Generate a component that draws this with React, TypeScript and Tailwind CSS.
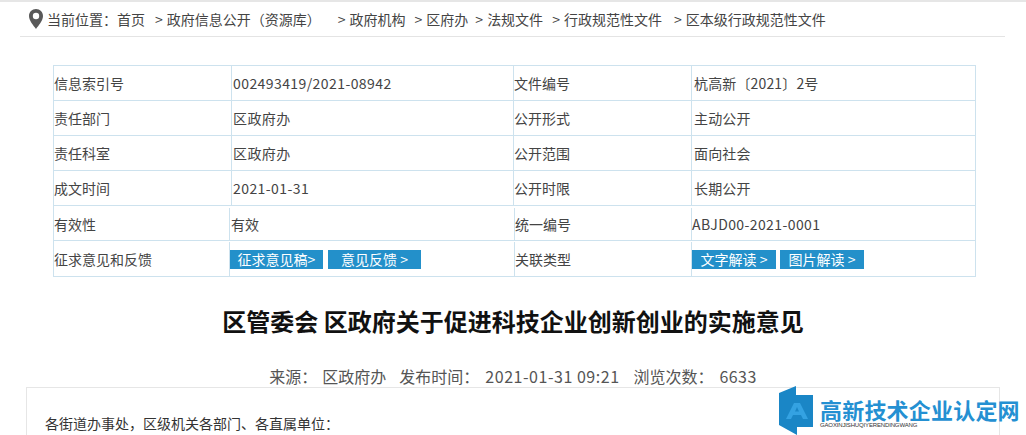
const FONT = "font-['Noto_Sans_CJK_SC','Open_Sans',sans-serif]";

const topRows = [
  ["信息索引号", "002493419/2021-08942", "文件编号", "杭高新〔2021〕2号"],
  ["责任部门", "区政府办", "公开形式", "主动公开"],
  ["责任科室", "区政府办", "公开范围", "面向社会"],
  ["成文时间", "2021-01-31", "公开时限", "长期公开"],
];

const crumbs = [
  { label: "政府信息公开（资源库）", ml: "ml-[10px]" },
  { label: "政府机构", ml: "ml-[17px]" },
  { label: "区府办", ml: "ml-[9px]" },
  { label: "法规文件", ml: "ml-[7px]" },
  { label: "行政规范性文件", ml: "ml-[9px]" },
  { label: "区本级行政规范性文件", ml: "ml-[12px]" },
];

const Cell = ({ children, w }: { children: React.ReactNode; w: string }) => (
  <div className={`${w} flex h-full items-center border-r border-[#cde2ee] last:border-r-0`}>{children}</div>
);

const LinkButton = ({ label, w }: { label: string; w: string }) => (
  <span className={`${w} flex h-[19px] items-center justify-center bg-[#2390ca] text-[14px] text-white`}>{label}</span>
);

const Logo = () => (
  <div className="absolute left-[779px] top-[386px] flex h-[49px] items-start">
    <svg width="35" height="49" viewBox="0 0 35 49">
      <path d="M0 7 L17 0 L17 9 L34 9 L34 41 L18 41 L18 49 L0 39 Z" fill="#1a86c6" />
      <path
        d="M7 33 L15 17 L21 17 L29 33 L24 33 L22 29 L14 29 L12 33 Z M16 25.500 L20 25.500 L18 21 Z"
        fill="#34a2e2"
        fillRule="evenodd"
      />
    </svg>
    <div className="mt-[12px] ml-[6px] flex flex-col">
      <span className="text-[22px] leading-[23px] font-bold tracking-[0.2px] whitespace-nowrap text-[#2490d2]">高新技术企业认定网</span>
      <span className="font-['Liberation_Sans',sans-serif] text-[6px] leading-[8px] tracking-[-0.15px] whitespace-nowrap text-[#333]">GAOXINJISHUQIYERENDINGWANG</span>
    </div>
  </div>
);

export default function App() {
  return (
    <div className={`${FONT} relative h-[435px] w-[1026px] overflow-hidden bg-white text-[14px] text-[#444]`}>
      <div className="h-[2px] bg-[#e6e6e6]" />
      <div className="mx-[20px] flex h-[35px] w-[985px] items-center border-b border-[#e4e4e4] pl-[9px]">
        <svg width="14" height="20" viewBox="0 0 14 20" className="mr-[4px]">
          <path d="M7 0C3 0 0 3 0 7c0 4.500 4.500 9.500 7 13 2.500-3.500 7-8.500 7-13 0-4-3-7-7-7z" fill="#595959" />
          <circle cx="7" cy="7" r="3.200" fill="#fff" />
        </svg>
        <span className="whitespace-nowrap">当前位置：首页</span>
        {crumbs.map((c) => (
          <span key={c.label} className={`${c.ml} whitespace-nowrap`}>
            <span className="mr-[4px]">&gt;</span>
            {c.label}
          </span>
        ))}
      </div>

      <div className="mx-[53px] mt-[28px] w-[923px] border border-[#cde2ee] text-[14px]">
        {topRows.map((r) => (
          <div key={r[0]} className="flex h-[35px] border-b border-[#cde2ee] last:h-[36px] last:border-b-2">
            <Cell w="w-[178px]">{r[0]}</Cell>
            <Cell w="w-[282px] pl-[1px] tracking-[0.42px]">{r[1]}</Cell>
            <Cell w="w-[178px]">{r[2]}</Cell>
            <Cell w="flex-1 pl-[2px] tracking-[0.15px]">{r[3]}</Cell>
          </div>
        ))}
        <div className="flex h-[35px] border-b border-[#cde2ee] pt-[2px]">
          <Cell w="w-[176px]">有效性</Cell>
          <Cell w="w-[285px] pl-[1px]">有效</Cell>
          <Cell w="w-[177px]">统一编号</Cell>
          <Cell w="flex-1 tracking-[0.4px]">ABJD00-2021-0001</Cell>
        </div>
        <div className="flex h-[35px] pt-[1px]">
          <Cell w="w-[176px]">征求意见和反馈</Cell>
          <Cell w="w-[285px] gap-[5px]">
            <LinkButton label="征求意见稿>" w="w-[93px]" />
            <LinkButton label="意见反馈&nbsp;>" w="w-[93px]" />
          </Cell>
          <Cell w="w-[177px]">关联类型</Cell>
          <Cell w="flex-1 gap-[4px]">
            <LinkButton label="文字解读&nbsp;>" w="w-[84px]" />
            <LinkButton label="图片解读&nbsp;>" w="w-[84px]" />
          </Cell>
        </div>
      </div>

      <h1 className="mt-[28px] text-center text-[24px] leading-[32px] font-bold text-[#111]">
        区管委会 区政府关于促进科技企业创新创业的实施意见
      </h1>

      <div className="mt-[28px] flex justify-center text-[16px] leading-[22px] text-[#555]">
        <span>来源：</span>
        <span className="ml-[5px]">区政府办</span>
        <span className="ml-[13px]">发布时间：</span>
        <span className="ml-[6px] tracking-[0.53px]">2021-01-31 09:21</span>
        <span className="ml-[14px]">浏览次数：</span>
        <span className="ml-[6px] tracking-[0.4px]">6633</span>
      </div>

      <div className="mx-[26px] h-[60px] w-[974px] border border-[#e6e6e6] px-[18px] pt-[25px] text-[14px] leading-[20px] text-[#333]">
        各街道办事处，区级机关各部门、各直属单位：
      </div>

      <Logo />
    </div>
  );
}
